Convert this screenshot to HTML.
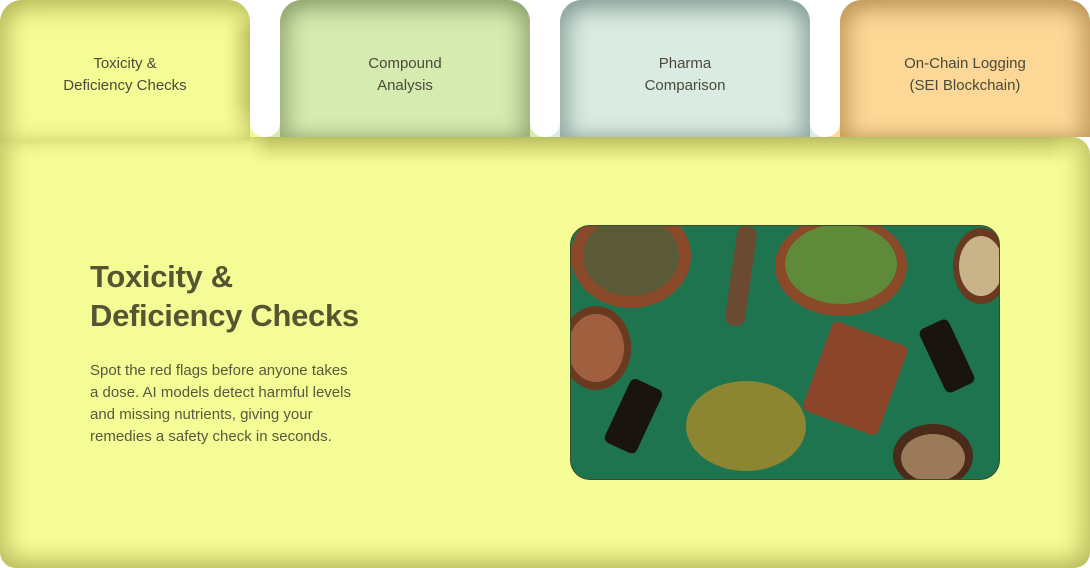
<!DOCTYPE html>
<html><head><meta charset="utf-8"><style>
*{margin:0;padding:0;box-sizing:border-box}
body{width:1090px;height:568px;background:#fff;position:relative;overflow:hidden;font-family:"Liberation Sans",sans-serif}
.tab{position:absolute;top:0;height:137px;width:250px;border-radius:22px 22px 0 0;display:flex;justify-content:center;padding-top:53px;text-align:center;font-size:15px;line-height:22px;color:#4a4a3a;z-index:3}
.t2{left:280px;background:#d5ebb0;box-shadow:inset 0 10px 22px rgba(120,140,90,.55),inset 12px 0 18px rgba(120,140,90,.35),inset -12px 0 18px rgba(120,140,90,.35)}
.t3{left:560px;background:#d9ebe2;box-shadow:inset 0 10px 22px rgba(110,135,125,.55),inset 12px 0 18px rgba(110,135,125,.35),inset -12px 0 18px rgba(110,135,125,.35)}
.t4{left:840px;background:#fcd796;box-shadow:inset 0 10px 22px rgba(170,130,70,.55),inset 12px 0 18px rgba(170,130,70,.35),inset -12px 0 18px rgba(170,130,70,.35)}
.foot{position:absolute;top:120px;height:17px;z-index:1}
.gap{position:absolute;top:0;height:137px;width:30px;background:#fff;border-radius:0 0 14px 14px;z-index:2}
.t1{left:0;width:250px;height:140px;border-radius:22px 22px 0 0;background:#f6fc95;box-shadow:inset 0 10px 22px rgba(150,150,60,.5),inset 12px 0 20px rgba(150,150,60,.3);z-index:4}
.t1r{position:absolute;left:226px;top:16px;width:24px;height:121px;background:linear-gradient(to left,rgba(150,150,60,.38),rgba(150,150,60,0));z-index:5;-webkit-mask-image:linear-gradient(to bottom,transparent,#000 15%,#000 70%,transparent);mask-image:linear-gradient(to bottom,transparent,#000 15%,#000 70%,transparent)}
.panel{position:absolute;left:0;top:137px;width:1090px;height:431px;background:#f6fc95;border-radius:0 18px 16px 16px;box-shadow:inset -12px 0 20px rgba(150,150,60,.35),inset 12px 0 20px rgba(150,150,60,.3),inset 0 -12px 20px rgba(150,150,60,.3);z-index:0}
.topsh{position:absolute;left:250px;top:137px;width:830px;height:28px;background:linear-gradient(to bottom,rgba(150,150,60,.4),rgba(150,150,60,0));z-index:1;-webkit-mask-image:linear-gradient(to right,transparent,#000 20px,#000 800px,transparent);mask-image:linear-gradient(to right,transparent,#000 20px,#000 800px,transparent)}
h1{position:absolute;left:90px;top:257px;font-size:31px;line-height:39px;font-weight:bold;color:#545632;z-index:6;letter-spacing:-0.3px}
p{position:absolute;left:90px;top:360px;font-size:15px;line-height:22px;color:#58583e;z-index:6;width:300px}
.img{position:absolute;left:570px;top:225px;width:430px;height:255px;border-radius:20px;background:#1f7450;overflow:hidden;z-index:6;border:1px solid #3a4a30}
</style></head><body>
<div class="panel"></div>
<div class="topsh"></div>
<div class="foot" style="left:240px;width:40px;background:#f3f995"></div>
<div class="foot" style="left:266px;width:278px;background:#d5ebb0"></div>
<div class="foot" style="left:546px;width:278px;background:#d9ebe2"></div>
<div class="foot" style="left:826px;width:30px;background:#fcd796"></div>
<div class="gap" style="left:250px"></div>
<div class="gap" style="left:530px"></div>
<div class="gap" style="left:810px"></div>
<div class="tab t2">Compound<br>Analysis</div>
<div class="tab t3">Pharma<br>Comparison</div>
<div class="tab t4">On-Chain Logging<br>(SEI Blockchain)</div>
<div class="tab t1"><span>Toxicity &amp;<br>Deficiency Checks</span></div>
<div class="t1r"></div>
<h1>Toxicity &amp;<br>Deficiency Checks</h1>
<p>Spot the red flags before anyone takes<br>a dose. AI models detect harmful levels<br>and missing nutrients, giving your<br>remedies a safety check in seconds.</p>
<div class="img"><svg width="430" height="255" viewBox="0 0 430 255">
<rect width="430" height="255" fill="#1f7450"/>
<ellipse cx="60" cy="30" rx="60" ry="52" fill="#8a4a2a"/><ellipse cx="60" cy="30" rx="48" ry="40" fill="#5a5a38"/>
<ellipse cx="270" cy="40" rx="66" ry="50" fill="#8a4a2a"/><ellipse cx="270" cy="38" rx="56" ry="40" fill="#5e8a3a"/>
<ellipse cx="410" cy="40" rx="28" ry="38" fill="#6a3a20"/><ellipse cx="410" cy="40" rx="22" ry="30" fill="#c9b48a"/>
<ellipse cx="25" cy="122" rx="35" ry="42" fill="#6a3a20"/><ellipse cx="25" cy="122" rx="28" ry="34" fill="#a06040"/>
<ellipse cx="362" cy="230" rx="40" ry="32" fill="#4a2a18"/><ellipse cx="362" cy="232" rx="32" ry="24" fill="#9a7a58"/>
<rect x="160" y="0" width="20" height="100" rx="8" fill="#6a4a30" transform="rotate(8 170 50)"/>
<rect x="245" y="105" width="80" height="95" rx="6" fill="#8a4428" transform="rotate(20 285 150)"/>
<rect x="45" y="155" width="35" height="70" rx="6" fill="#1a1410" transform="rotate(25 62 190)"/>
<rect x="360" y="95" width="32" height="70" rx="6" fill="#1a1410" transform="rotate(-25 376 130)"/>
<ellipse cx="175" cy="200" rx="60" ry="45" fill="#a8892a" opacity=".8"/>
</svg></div>
</body></html>
